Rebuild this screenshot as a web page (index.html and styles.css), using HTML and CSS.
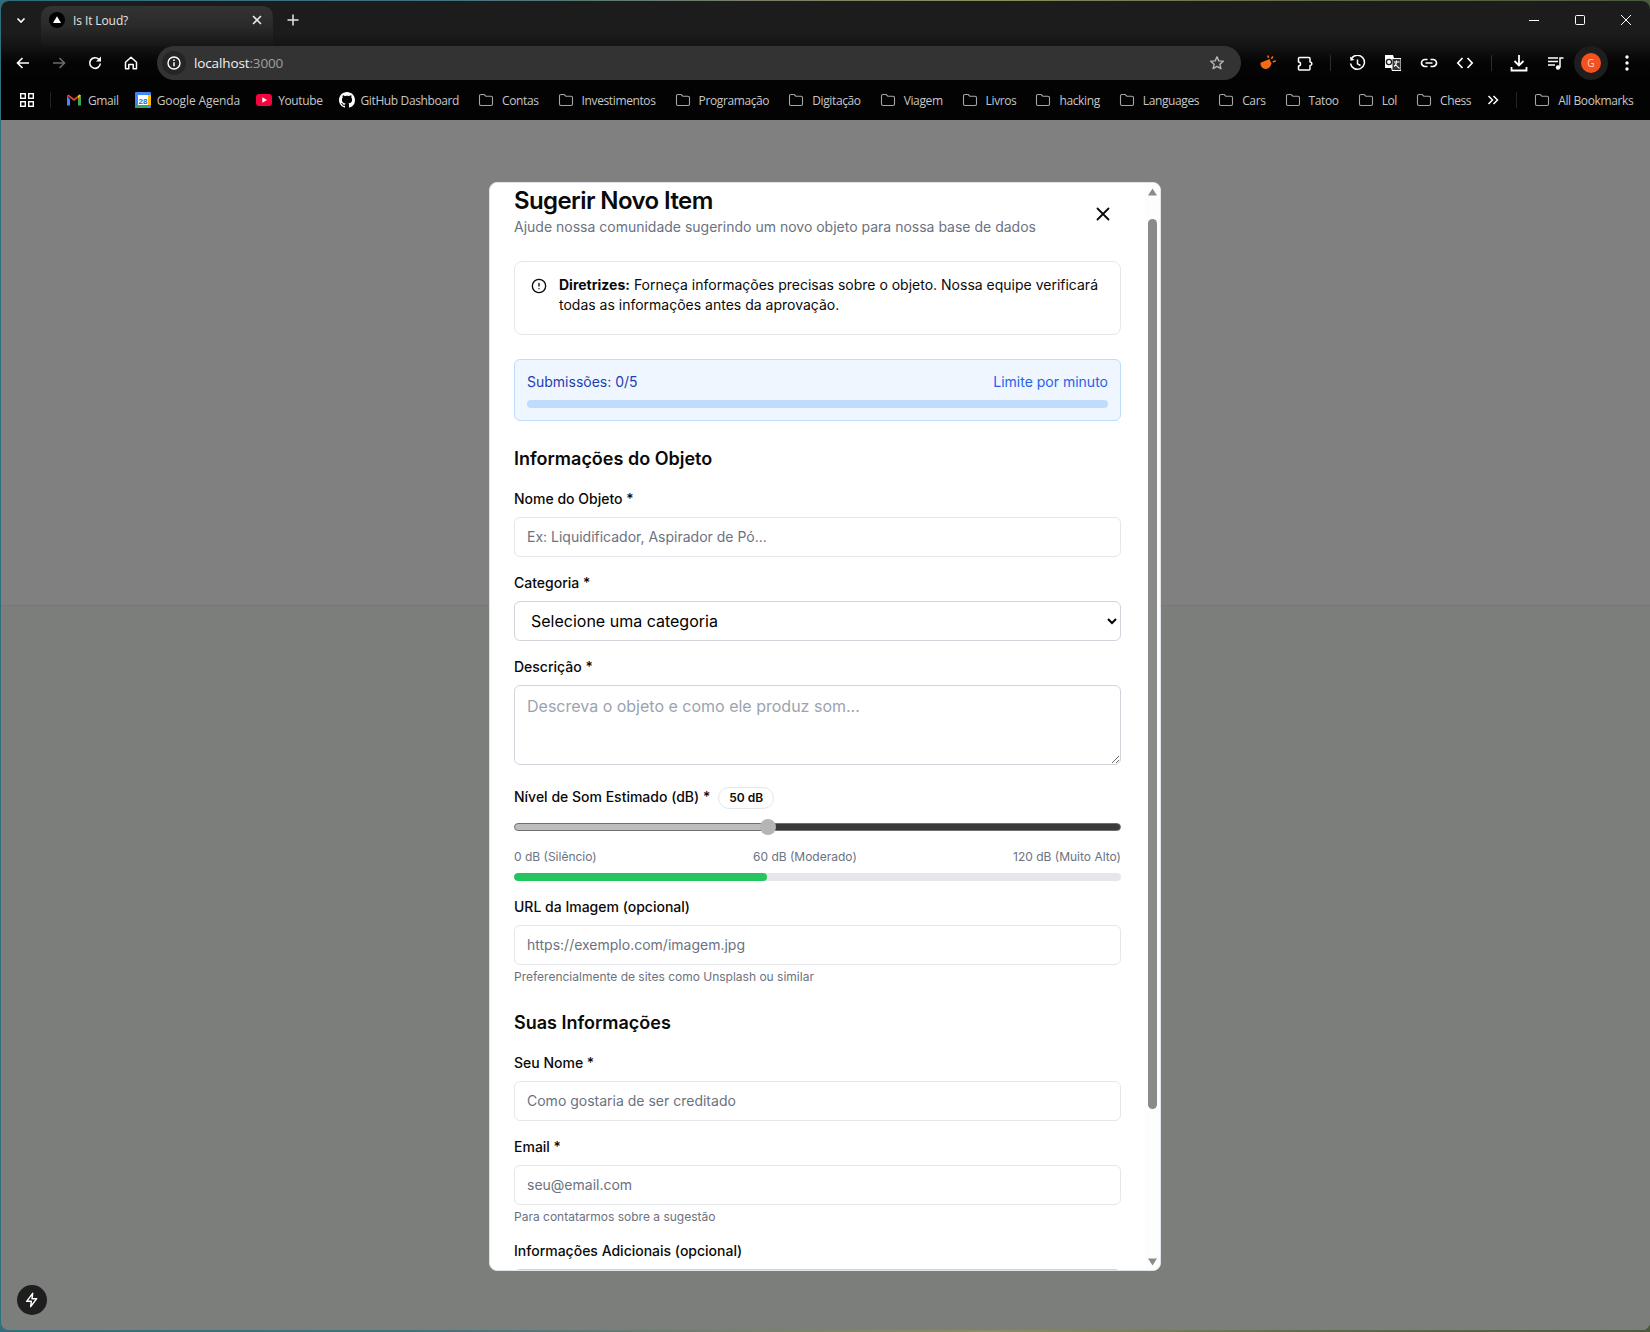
FILE: index.html
```html
<!DOCTYPE html>
<html lang="pt-BR">
<head>
<meta charset="utf-8">
<title>Is It Loud?</title>
<link rel="stylesheet" href="styles.css">
</head>
<body>
<svg class="defs" width="0" height="0" aria-hidden="true">
  <symbol id="folder" viewBox="0 0 16 16"><path d="M1.5 4a1.5 1.5 0 0 1 1.5-1.5h3.2l1.6 1.7H13a1.5 1.5 0 0 1 1.5 1.5v6.3a1.5 1.5 0 0 1-1.5 1.5H3a1.5 1.5 0 0 1-1.5-1.5z" fill="none" stroke="#a6a6a6" stroke-width="1.1"/></symbol>
</svg>
<div class="window">
  <header class="tabstrip">
    <button class="strip-btn" aria-label="Pesquisar guias"><svg width="12" height="12" viewBox="0 0 12 12"><path d="M2.5 4.5 6 8l3.5-3.5" fill="none" stroke="#fff" stroke-width="1.6"/></svg></button>
    <div class="tab">
      <svg class="favicon" width="16" height="16" viewBox="0 0 16 16"><circle cx="8" cy="8" r="8" fill="#000"/><path d="M8 4.2 12 11H4z" fill="#fff"/></svg>
      <span class="tab-title">Is It Loud?</span>
      <svg width="12" height="12" viewBox="0 0 12 12"><path d="M2 2l8 8M10 2l-8 8" stroke="#e6e6e6" stroke-width="1.6"/></svg>
    </div>
    <button class="strip-btn new-tab" aria-label="Nova guia"><svg width="14" height="14" viewBox="0 0 14 14"><path d="M7 1.5v11M1.5 7h11" stroke="#e6e6e6" stroke-width="1.5"/></svg></button>
    <div class="win-controls">
      <svg width="12" height="12" viewBox="0 0 12 12"><path d="M1 6.5h10" stroke="#fff" stroke-width="1"/></svg>
      <svg width="12" height="12" viewBox="0 0 12 12"><rect x="1.5" y="1.5" width="9" height="9" rx="1" fill="none" stroke="#fff" stroke-width="1"/></svg>
      <svg width="12" height="12" viewBox="0 0 12 12"><path d="M1 1l10 10M11 1 1 11" stroke="#fff" stroke-width="1"/></svg>
    </div>
  </header>

  <nav class="toolbar">
    <button class="tool"><svg width="16" height="16" viewBox="0 0 16 16"><path d="M14 8H2.5M7.5 3 2.5 8l5 5" fill="none" stroke="#fff" stroke-width="1.6"/></svg></button>
    <button class="tool"><svg width="16" height="16" viewBox="0 0 16 16"><path d="M2 8h11.500M8.500 3l5 5-5 5" fill="none" stroke="#6b6b6b" stroke-width="1.6"/></svg></button>
    <button class="tool"><svg width="16" height="16" viewBox="0 0 16 16"><path d="M13.300 8.500A5.300 5.300 0 1 1 11.800 4.300L13.500 6" fill="none" stroke="#fff" stroke-width="1.600"/><path d="M14 1.500v5H9z" fill="#fff"/></svg></button>
    <button class="tool"><svg width="16" height="16" viewBox="0 0 16 16"><path d="M2.500 7.300 8 2.300l5.500 5v6.500h-3.300V9.500H5.800v4.300H2.500z" fill="none" stroke="#fff" stroke-width="1.500" stroke-linejoin="round"/></svg></button>
    <div class="omnibox">
      <span class="site-info"><svg width="14" height="14" viewBox="0 0 14 14"><circle cx="7" cy="7" r="6" fill="none" stroke="#fff" stroke-width="1.400"/><path d="M7 6.200v4" stroke="#fff" stroke-width="1.500"/><circle cx="7" cy="4.200" r=".9" fill="#fff"/></svg></span>
      <span class="url">localhost<span class="url-port">:3000</span></span>
      <svg class="star" width="16" height="16" viewBox="0 0 16 16"><path d="M8 1.800l1.800 4.100 4.500.4-3.400 3 1 4.400L8 11.400l-3.900 2.300 1-4.400-3.400-3 4.500-.4z" fill="none" stroke="#b5b5b5" stroke-width="1.400" stroke-linejoin="round"/></svg>
    </div>
    <button class="tool"><svg width="18" height="18" viewBox="0 0 18 18"><path d="M1.500 8.800 10.500 5l2 4.500c-.6 3-3 5.500-6 5.500-2.500 0-5.500-2.500-5-6.200z" fill="#f36a10"/><path d="M9.500 3.800 9 1.500M12.300 4.800l1.700-2.300M13.800 8l3-1.200" stroke="#f36a10" stroke-width="1.600"/></svg></button>
    <button class="tool"><svg width="17" height="17" viewBox="0 0 17 17"><path d="M3.500 2.500H13a1 1 0 0 1 1 1V7a1.800 1.800 0 0 1 0 3.600V14a1 1 0 0 1-1 1H3.500a1 1 0 0 1-1-1v-3a2 2 0 0 0 0-4V3.500a1 1 0 0 1 1-1z" fill="none" stroke="#fff" stroke-width="1.500" stroke-linejoin="round"/></svg></button>
    <span class="tool-sep"></span>
    <button class="tool"><svg width="17" height="17" viewBox="0 0 17 17"><path d="M2.700 3.200A7 7 0 1 1 1.500 8.500" fill="none" stroke="#fff" stroke-width="1.500"/><path d="M1 1.500l.5 4.200 4-.7z" fill="#fff"/><path d="M8.500 4.500v4.300l3 1.700" fill="none" stroke="#fff" stroke-width="1.500"/></svg></button>
    <button class="tool"><svg width="18" height="18" viewBox="0 0 18 18"><path d="M1 1h8l1 3h7v13H8l-1-3H1z" fill="#fff"/><rect x="8.500" y="5" width="8" height="11" fill="#333"/><circle cx="5" cy="8" r="2.600" fill="none" stroke="#222" stroke-width="1.400"/><path d="M10 8h5.500M12.500 6.500V8c0 2-1 3.500-2.500 4.500M11 9.500c.8 1.500 2.500 3.500 4.500 5" fill="none" stroke="#fff" stroke-width="1.100"/></svg></button>
    <button class="tool"><svg width="18" height="18" viewBox="0 0 18 18"><path d="M7.500 5.500H5a3.500 3.500 0 0 0 0 7h2.500M10.500 5.500H13a3.500 3.500 0 0 1 0 7h-2.500M5.500 9h7" fill="none" stroke="#fff" stroke-width="1.700"/></svg></button>
    <button class="tool"><svg width="18" height="18" viewBox="0 0 18 18"><path d="M6.500 4 1.800 9l4.700 5M11.500 4l4.700 5-4.700 5" fill="none" stroke="#fff" stroke-width="1.700"/></svg></button>
    <span class="tool-sep wide"></span>
    <button class="tool"><svg width="18" height="18" viewBox="0 0 18 18"><path d="M9 1v10M4.500 7 9 11.500 13.500 7M1.500 13v3.500h15V13" fill="none" stroke="#fff" stroke-width="1.800"/></svg></button>
    <button class="tool"><svg width="18" height="18" viewBox="0 0 18 18"><path d="M2 4h10M2 7.500h10M2 11h7" stroke="#fff" stroke-width="1.400"/><path d="M14 13.500V4h3.500" fill="none" stroke="#fff" stroke-width="1.500"/><circle cx="12" cy="13.500" r="2.200" fill="#fff"/></svg></button>
    <span class="avatar-wrap"><span class="avatar">G</span></span>
    <button class="tool"><svg width="6" height="18" viewBox="0 0 6 18"><circle cx="3" cy="3" r="1.700" fill="#fff"/><circle cx="3" cy="9" r="1.700" fill="#fff"/><circle cx="3" cy="15" r="1.700" fill="#fff"/></svg></button>
  </nav>

  <nav class="bookmarks">
    <svg class="apps" width="14" height="14" viewBox="0 0 14 14"><g fill="none" stroke="#fff" stroke-width="1.400"><rect x=".7" y=".7" width="4.600" height="4.600"/><rect x="8.700" y=".7" width="4.600" height="4.600"/><rect x=".7" y="8.700" width="4.600" height="4.600"/><rect x="8.700" y="8.700" width="4.600" height="4.600"/></g></svg>
    <span class="bm-sep start"></span>
    <a class="bm"><svg width="16" height="16" viewBox="0 0 16 16"><path d="M1 3.500v10h3V7.500z" fill="#4285f4"/><path d="M15 3.500v10h-3V7.500z" fill="#34a853"/><path d="M1 3.500 8 9l7-5.500-1.500-1L8 6.700 2.500 2.500z" fill="#ea4335"/><path d="M12 7.500 15 3.500 13.500 2.500 12 3.700z" fill="#fbbc04"/></svg><span>Gmail</span></a>
    <a class="bm wide"><svg width="16" height="16" viewBox="0 0 16 16"><rect width="16" height="16" rx="1" fill="#4285f4"/><rect x="3" y="3" width="10" height="10" fill="#fff"/><rect y="13" width="12" height="3" fill="#34a853"/><rect x="13" y="3" width="3" height="10" fill="#fbbc04"/><text x="8" y="11.500" class="cal-num">28</text></svg><span>Google Agenda</span></a>
    <a class="bm"><svg width="16" height="16" viewBox="0 0 16 16"><rect y="2" width="16" height="12" rx="3" fill="#f5033f"/><path d="M6.300 5.300v5.400L11 8z" fill="#fff"/></svg><span>Youtube</span></a>
    <a class="bm"><svg width="16" height="16" viewBox="0 0 16 16"><path fill="#fff" d="M8 0C3.580 0 0 3.580 0 8c0 3.540 2.290 6.530 5.470 7.590.4.070.55-.17.55-.38 0-.19-.01-.82-.01-1.490-2.010.37-2.530-.49-2.690-.94-.09-.23-.48-.94-.82-1.130-.28-.15-.68-.52-.01-.53.630-.01 1.080.58 1.230.82.720 1.210 1.870.87 2.330.66.070-.52.280-.87.510-1.070-1.780-.2-3.640-.89-3.640-3.950 0-.87.310-1.590.82-2.150-.08-.2-.36-1.020.08-2.120 0 0 .67-.21 2.200.82.640-.18 1.320-.27 2-.27s1.360.09 2 .27c1.530-1.040 2.200-.82 2.200-.82.440 1.100.160 1.920.080 2.120.51.560.82 1.270.82 2.150 0 3.070-1.870 3.750-3.650 3.950.290.250.540.730.540 1.480 0 1.070-.01 1.930-.01 2.200 0 .21.150.46.550.38A8.010 8.010 0 0 0 16 8c0-4.420-3.580-8-8-8z"/></svg><span>GitHub Dashboard</span></a>
    <a class="bm folder"><svg width="16" height="16"><use href="#folder"/></svg><span>Contas</span></a>
    <a class="bm folder"><svg width="16" height="16"><use href="#folder"/></svg><span>Investimentos</span></a>
    <a class="bm folder"><svg width="16" height="16"><use href="#folder"/></svg><span>Programação</span></a>
    <a class="bm folder"><svg width="16" height="16"><use href="#folder"/></svg><span>Digitação</span></a>
    <a class="bm folder"><svg width="16" height="16"><use href="#folder"/></svg><span>Viagem</span></a>
    <a class="bm folder"><svg width="16" height="16"><use href="#folder"/></svg><span>Livros</span></a>
    <a class="bm folder"><svg width="16" height="16"><use href="#folder"/></svg><span>hacking</span></a>
    <a class="bm folder"><svg width="16" height="16"><use href="#folder"/></svg><span>Languages</span></a>
    <a class="bm folder"><svg width="16" height="16"><use href="#folder"/></svg><span>Cars</span></a>
    <a class="bm folder"><svg width="16" height="16"><use href="#folder"/></svg><span>Tatoo</span></a>
    <a class="bm folder"><svg width="16" height="16"><use href="#folder"/></svg><span>Lol</span></a>
    <a class="bm folder"><svg width="16" height="16"><use href="#folder"/></svg><span>Chess</span></a>
    <div class="bm-end">
      <svg width="12" height="12" viewBox="0 0 12 12"><path d="M1.500 2 5.500 6l-4 4M6.500 2l4 4-4 4" fill="none" stroke="#fff" stroke-width="1.500"/></svg>
      <span class="bm-sep"></span>
      <a class="bm last"><svg width="16" height="16"><use href="#folder"/></svg><span>All Bookmarks</span></a>
    </div>
  </nav>

  <main class="page">
    <div class="page-top"></div>
    <div class="page-bottom"></div>

    <section class="modal">
      <div class="modal-body">
        <div class="modal-head">
          <div class="modal-heading">
            <h2>Sugerir Novo Item</h2>
            <p>Ajude nossa comunidade sugerindo um novo objeto para nossa base de dados</p>
          </div>
          <button class="close" aria-label="Fechar"><svg width="22" height="22" viewBox="0 0 24 24"><path d="M18 6 6 18M6 6l12 12" fill="none" stroke="#0a0a0a" stroke-width="2" stroke-linecap="round"/></svg></button>
        </div>

        <div class="alert">
          <svg width="16" height="16" viewBox="0 0 24 24"><g fill="none" stroke="#0a0a0a" stroke-width="2" stroke-linecap="round"><circle cx="12" cy="12" r="10"/><path d="M12 8v4M12 16h.01"/></g></svg>
          <p><strong>Diretrizes:</strong> Forneça informações precisas sobre o objeto. Nossa equipe verificará todas as informações antes da aprovação.</p>
        </div>

        <div class="limit">
          <div class="limit-row"><span class="limit-count">Submissões: 0/5</span><span class="limit-note">Limite por minuto</span></div>
          <div class="limit-bar"></div>
        </div>

        <h3>Informações do Objeto</h3>
        <div class="field first">
          <label>Nome do Objeto *</label>
          <input type="text" placeholder="Ex: Liquidificador, Aspirador de Pó...">
        </div>
        <div class="field">
          <label>Categoria *</label>
          <select><option>Selecione uma categoria</option></select>
        </div>
        <div class="field">
          <label>Descrição *</label>
          <textarea placeholder="Descreva o objeto e como ele produz som..."></textarea>
        </div>
        <div class="sound">
          <div class="sound-head"><label>Nível de Som Estimado (dB) *</label><span class="badge">50 dB</span></div>
          <input class="range" type="range" min="0" max="120" value="50">
          <div class="scale"><span>0 dB (Silêncio)</span><span>60 dB (Moderado)</span><span>120 dB (Muito Alto)</span></div>
          <div class="meter"><div class="meter-fill" style="width:41.67%"></div></div>
        </div>
        <div class="field">
          <label>URL da Imagem (opcional)</label>
          <input type="text" placeholder="https://exemplo.com/imagem.jpg">
          <small>Preferencialmente de sites como Unsplash ou similar</small>
        </div>

        <h3>Suas Informações</h3>
        <div class="field first">
          <label>Seu Nome *</label>
          <input type="text" placeholder="Como gostaria de ser creditado">
        </div>
        <div class="field">
          <label>Email *</label>
          <input type="text" placeholder="seu@email.com">
          <small>Para contatarmos sobre a sugestão</small>
        </div>
        <div class="field">
          <label>Informações Adicionais (opcional)</label>
          <textarea></textarea>
        </div>
      </div>
      <div class="scrollbar">
        <svg width="15" height="8" viewBox="0 0 15 8"><path d="M7.500 .5 12 7.500H3z" fill="#8a8a8a"/></svg>
        <div class="thumb"></div>
        <svg class="arrow-down" width="15" height="8" viewBox="0 0 15 8"><path d="M3 .5h9L7.500 7.500z" fill="#8a8a8a"/></svg>
      </div>
    </section>

    <button class="devtools" aria-label="Ferramentas"><svg width="16" height="16" viewBox="0 0 24 24"><path d="M13 2 4 14h7l-1 8 9-12h-7z" fill="none" stroke="#fff" stroke-width="2.200" stroke-linejoin="round"/></svg></button>
  </main>
</div>
</body>
</html>
```
FILE: styles.css
```css
* { box-sizing: border-box; }
html, body { margin: 0; height: 100%; }
body {
  height: 1332px;
  overflow: hidden;
  padding: 1px 0 2px 1px;
  background:
    linear-gradient(90deg, #2f6f7d 0, #3d7381 25%, #76806a 45%, #8a8f5c 60%, #5d6a48 80%, #4c5a3c 100%);
}
.defs { position: absolute; }
button { background: none; border: 0; padding: 0; margin: 0; display: flex; align-items: center; justify-content: center; }

.window {
  display: flex;
  flex-direction: column;
  height: 100%;
  border-radius: 8px;
  overflow: hidden;
  background: #7c7e7c;
}

/* Browser chrome */
.tabstrip {
  height: 45px;
  flex: none;
  display: flex;
  align-items: flex-end;
  background: linear-gradient(#1c1c1c 0, #1c1c1c 32px, #141414 45px);
  font-family: "Open Sans", sans-serif;
}
.strip-btn { width: 24px; height: 24px; margin: 0 0 14px 8px; }
.tab {
  width: 232px;
  height: 40px;
  margin-left: 8px;
  padding: 0 10px 12px 8px;
  display: flex;
  align-items: center;
  background: linear-gradient(#333 0, #2a2a2a 50%, #161616 100%);
  border-radius: 10px 10px 0 0;
}
.tab-title { flex: 1; margin-left: 8px; color: #e3e3e3; font-size: 12px; letter-spacing: -.1px; }
.win-controls {
  margin-left: auto;
  height: 100%;
  display: flex;
  align-items: center;
  gap: 34px;
  padding: 0 18px 8px 0;
}

.toolbar {
  height: 34px;
  flex: none;
  display: flex;
  align-items: center;
  padding: 0 5px 0 4px;
  background: linear-gradient(#141414 0, #050505 16px, #020202 100%);
}
.tool { width: 36px; height: 34px; flex: none; }
.tool-sep { width: 1px; height: 16px; margin: 0 8px; background: #2c2c2c; flex: none; }
.tool-sep.wide { margin-right: 9px; }
.omnibox {
  flex: 1;
  height: 34px;
  margin: 0 9px 0 8px;
  padding: 0 16px 0 5px;
  display: flex;
  align-items: center;
  background: #333;
  border-radius: 17px;
}
.site-info {
  width: 24px; height: 24px;
  display: flex; align-items: center; justify-content: center;
  background: #252525;
  border-radius: 50%;
}
.url { margin-left: 8px; flex: 1; color: #f2f2f2; font: 13.5px "Open Sans", sans-serif; letter-spacing: -.13px; }
.url-port { color: #a0a0a0; }
.avatar-wrap {
  width: 34px; height: 34px; margin: 0 1px; flex: none;
  display: flex; align-items: center; justify-content: center;
  background: #1e1e1e; border-radius: 50%;
}
.avatar {
  width: 20px; height: 20px;
  display: flex; align-items: center; justify-content: center;
  background: #f5511e; color: #f5d8cc; border-radius: 50%;
  font: 10px "Open Sans", sans-serif;
}

.bookmarks {
  height: 40px;
  flex: none;
  display: flex;
  align-items: center;
  gap: 16px;
  padding: 0 18px 0 19px;
  background: #030303;
  font: 12px "Open Sans", sans-serif;
  color: #c7c7c7;
}
.apps { flex: none; }
.bm-sep { width: 1px; height: 16px; background: #222; flex: none; }
.bm-sep.start { margin: 0 -1px 0 0; }
.bm { display: flex; align-items: center; gap: 6px; white-space: nowrap; flex: none; }
.bm.folder { gap: 8px; margin-left: 3px; }
.bm.last { gap: 8px; }
.bm span { letter-spacing: -.38px; }
.bm.wide span { letter-spacing: -.1px; }
.cal-num { font: 700 8px "Liberation Sans", sans-serif; fill: #1967d2; text-anchor: middle; }
.bm-end { margin-left: auto; display: flex; align-items: center; gap: 17px; }

/* Page under the dialog */
.page { flex: 1; position: relative; display: flex; flex-direction: column; min-height: 0; }
.page-top { height: 485px; flex: none; background: #808080; }
.page-bottom { flex: 1; background: #7c7e7c; border-top: 1px solid #757775; }
.devtools {
  position: absolute;
  left: 16px;
  bottom: 15px;
  width: 30px;
  height: 30px;
  background: #1e1e1e;
  border-radius: 50%;
}

/* Dialog */
.modal {
  position: absolute;
  left: 488px;
  top: 62px;
  width: 672px;
  height: 1089px;
  display: flex;
  background: #fff;
  border: 1px solid #dfe3ea;
  border-radius: 8px;
  overflow: hidden;
  font-family: Inter, sans-serif;
  color: #0a0a0a;
  font-size: 14px;
  line-height: 20px;
}
.modal-body { flex: 1; min-width: 0; padding: 2px 24px 0; overflow: hidden; }
.modal-head { display: flex; justify-content: space-between; align-items: flex-start; }
.modal-heading { flex: 1; }
.modal-head h2 { margin: 0; font-size: 24px; line-height: 32px; font-weight: 600; letter-spacing: -.6px; }
.modal-head p { margin: 0; color: #6b7280; }
.close { width: 22px; height: 22px; margin: 18px 7px 0 0; }

.alert {
  margin-top: 24px;
  height: 74px;
  padding: 16px;
  display: flex;
  gap: 12px;
  align-items: flex-start;
  border: 1px solid #e5e7eb;
  border-radius: 8px;
}
.alert svg { flex: none; }
.alert p { margin: -3px 0 0; }
.alert strong { font-weight: 700; }

.limit {
  margin-top: 24px;
  padding: 12px;
  background: #eff6ff;
  border: 1px solid #bfdbfe;
  border-radius: 6px;
}
.limit-row { display: flex; justify-content: space-between; }
.limit-count { color: #1e40af; }
.limit-note { color: #2563eb; }
.limit-bar { height: 8px; margin-top: 8px; background: #bfdbfe; border-radius: 4px; }

h3 { margin: 24px 0 0; font-size: 18px; line-height: 28px; font-weight: 600; }
.field { margin-top: 16px; display: flex; flex-direction: column; }
label { font-weight: 500; }
.field label { margin-bottom: 8px; }
input[type="text"], select, textarea {
  display: block;
  width: 100%;
  height: 40px;
  padding: 0 12px;
  background: #fff;
  border: 1px solid #e5e7eb;
  border-radius: 6px;
  font: 14px/20px Inter, sans-serif;
  color: #0a0a0a;
  outline: none;
}
input[type="text"] { padding-bottom: 2px; }
::placeholder { color: #6b7280; opacity: 1; }
select { font-size: 16px; color: #000; padding-left: 12px; border-color: #d1d5db; }
textarea { height: 80px; padding: 8px 12px; font-size: 16px; line-height: 24px; border-color: #d1d5db; resize: vertical; }
textarea::placeholder { color: #9ca3af; }
small { margin-top: 4px; font-size: 12px; line-height: 16px; color: #6b7280; }

.sound { margin-top: 22px; }
.sound-head { display: flex; align-items: center; gap: 8px; height: 22px; }
.sound-head label { padding-bottom: 2px; }
.badge {
  width: 56px;
  height: 22px;
  display: flex; align-items: center; justify-content: center;
  border: 1px solid #e5e7eb;
  border-radius: 11px;
  font-size: 12px;
  font-weight: 600;
}
.range {
  display: block;
  width: 100%;
  height: 16px;
  margin: 10px 0 0;
  appearance: none;
  background: transparent;
}
.range::-webkit-slider-runnable-track {
  height: 8px;
  border-radius: 4px;
  border: 1px solid #6f6f6f;
  background: linear-gradient(90deg, #bdbdbd 0, #bdbdbd 42%, #3a3a3a 42%, #3a3a3a 100%);
}
.range::-webkit-slider-thumb {
  appearance: none;
  width: 16px;
  height: 16px;
  margin-top: -5px;
  border-radius: 50%;
  background: #b5b5b5;
}
.scale { margin-top: 14px; display: flex; justify-content: space-between; font-size: 12px; line-height: 16px; color: #6b7280; }
.meter { height: 8px; margin-top: 8px; background: #e5e7eb; border-radius: 4px; overflow: hidden; }
.meter-fill { height: 100%; background: #22c55e; border-radius: 4px; }

.scrollbar {
  width: 15px;
  flex: none;
  padding: 5px 0 4px;
  display: flex;
  flex-direction: column;
  background: #fdfdfd;
}
.thumb { width: 9px; height: 890px; margin: 23px 0 0 3px; background: #8a8a8a; border-radius: 5px; }
.arrow-down { margin-top: auto; }
```
